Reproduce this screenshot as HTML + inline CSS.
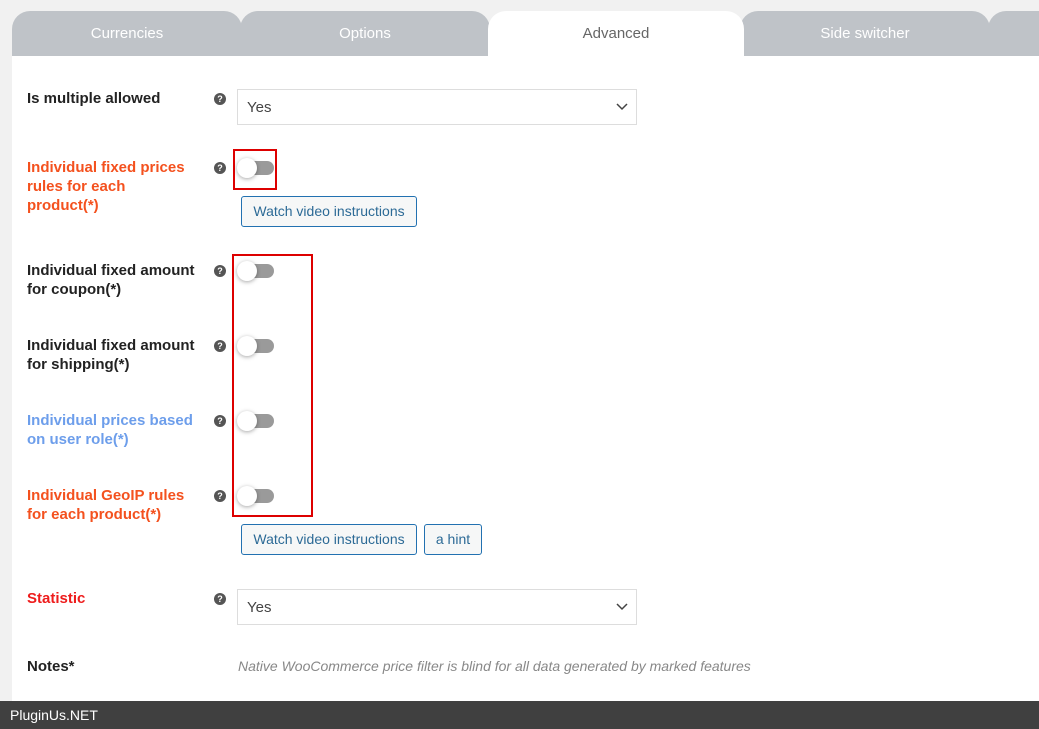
<!DOCTYPE html>
<html><head><meta charset="utf-8"><style>
*{margin:0;padding:0;box-sizing:border-box}
body{width:1039px;height:729px;background:#f1f1f1;font-family:"Liberation Sans",sans-serif;position:relative;overflow:hidden}
.abs{position:absolute}
.tab{position:absolute;top:11px;height:45px;background:#bfc3c8;border-radius:18px 18px 0 0;color:#fff;font-size:15px;text-align:center;line-height:46px}
.content{position:absolute;left:12px;top:56px;width:1027px;height:645px;background:#fff}
.lbl{position:absolute;left:27px;font-size:15px;font-weight:bold;line-height:19px;color:#222}
.q{position:absolute;left:214px;width:12px;height:12px;border-radius:50%;background:#555;color:#fff;font-size:9px;font-weight:bold;text-align:center;line-height:12px}
.sel{position:absolute;left:237px;width:400px;height:36px;border:1px solid #ddd;background:#fff;font-size:15px;color:#444;padding-left:9px;line-height:36px}
.sel svg{position:absolute;right:8px;top:13px}
.tg{position:absolute;left:237px;width:37px;height:14px}
.tg .tr{position:absolute;left:3px;top:0;width:34px;height:14px;border-radius:7px;background:#9a9a9a}
.tg .kn{position:absolute;left:0;top:-3px;width:20px;height:20px;border-radius:50%;background:#fff;box-shadow:0 1px 4px rgba(0,0,0,.35)}
.btn{position:absolute;height:31px;border:1px solid #2271b1;border-radius:3px;background:#f6f7f7;color:#2c6a96;font-size:14px;line-height:29px;text-align:center}
.redbox{position:absolute;border:2px solid #d00}
</style></head><body>
<div class="tab" style="left:12px;width:230px">Currencies</div>
<div class="tab" style="left:240px;width:250px">Options</div>
<div class="tab" style="left:740px;width:250px">Side switcher</div>
<div class="tab" style="left:988px;width:80px"></div>
<div class="tab" style="left:488px;width:256px;background:#fff;color:#666;z-index:2">Advanced</div>
<div class="content"></div>

<div class="lbl" style="top:89px">Is multiple allowed</div>
<div class="q" style="top:93px">?</div>
<div class="sel" style="top:89px">Yes<svg width="12" height="8"><path d="M1 1l5 5 5-5" stroke="#444" stroke-width="1.5" fill="none"/></svg></div>

<div class="lbl" style="top:158px;color:#f4511e">Individual fixed prices<br>rules for each<br>product(*)</div>
<div class="q" style="top:162px">?</div>
<div class="redbox" style="left:233px;top:149px;width:44px;height:41px"></div>
<div class="tg" style="top:161px"><div class="tr"></div><div class="kn"></div></div>
<div class="btn" style="left:241px;top:196px;width:176px">Watch video instructions</div>

<div class="redbox" style="left:232px;top:254px;width:81px;height:263px"></div>
<div class="lbl" style="top:261px">Individual fixed amount<br>for coupon(*)</div>
<div class="q" style="top:265px">?</div>
<div class="tg" style="top:264px"><div class="tr"></div><div class="kn"></div></div>

<div class="lbl" style="top:336px">Individual fixed amount<br>for shipping(*)</div>
<div class="q" style="top:340px">?</div>
<div class="tg" style="top:339px"><div class="tr"></div><div class="kn"></div></div>

<div class="lbl" style="top:411px;color:#6d9eeb">Individual prices based<br>on user role(*)</div>
<div class="q" style="top:415px">?</div>
<div class="tg" style="top:414px"><div class="tr"></div><div class="kn"></div></div>

<div class="lbl" style="top:486px;color:#f4511e">Individual GeoIP rules<br>for each product(*)</div>
<div class="q" style="top:490px">?</div>
<div class="tg" style="top:489px"><div class="tr"></div><div class="kn"></div></div>
<div class="btn" style="left:241px;top:524px;width:176px">Watch video instructions</div>
<div class="btn" style="left:424px;top:524px;width:58px">a hint</div>

<div class="lbl" style="top:589px;color:#ee1c1c">Statistic</div>
<div class="q" style="top:593px">?</div>
<div class="sel" style="top:589px">Yes<svg width="12" height="8"><path d="M1 1l5 5 5-5" stroke="#444" stroke-width="1.5" fill="none"/></svg></div>

<div class="lbl" style="top:657px">Notes*</div>
<div class="abs" style="left:238px;top:658px;font-size:14px;font-style:italic;color:#888">Native WooCommerce price filter is blind for all data generated by marked features</div>

<div class="abs" style="left:0;top:701px;width:1039px;height:28px;background:#404040;color:#fff;font-size:14px;line-height:28px;padding-left:10px">PluginUs.NET</div>
</body></html>
